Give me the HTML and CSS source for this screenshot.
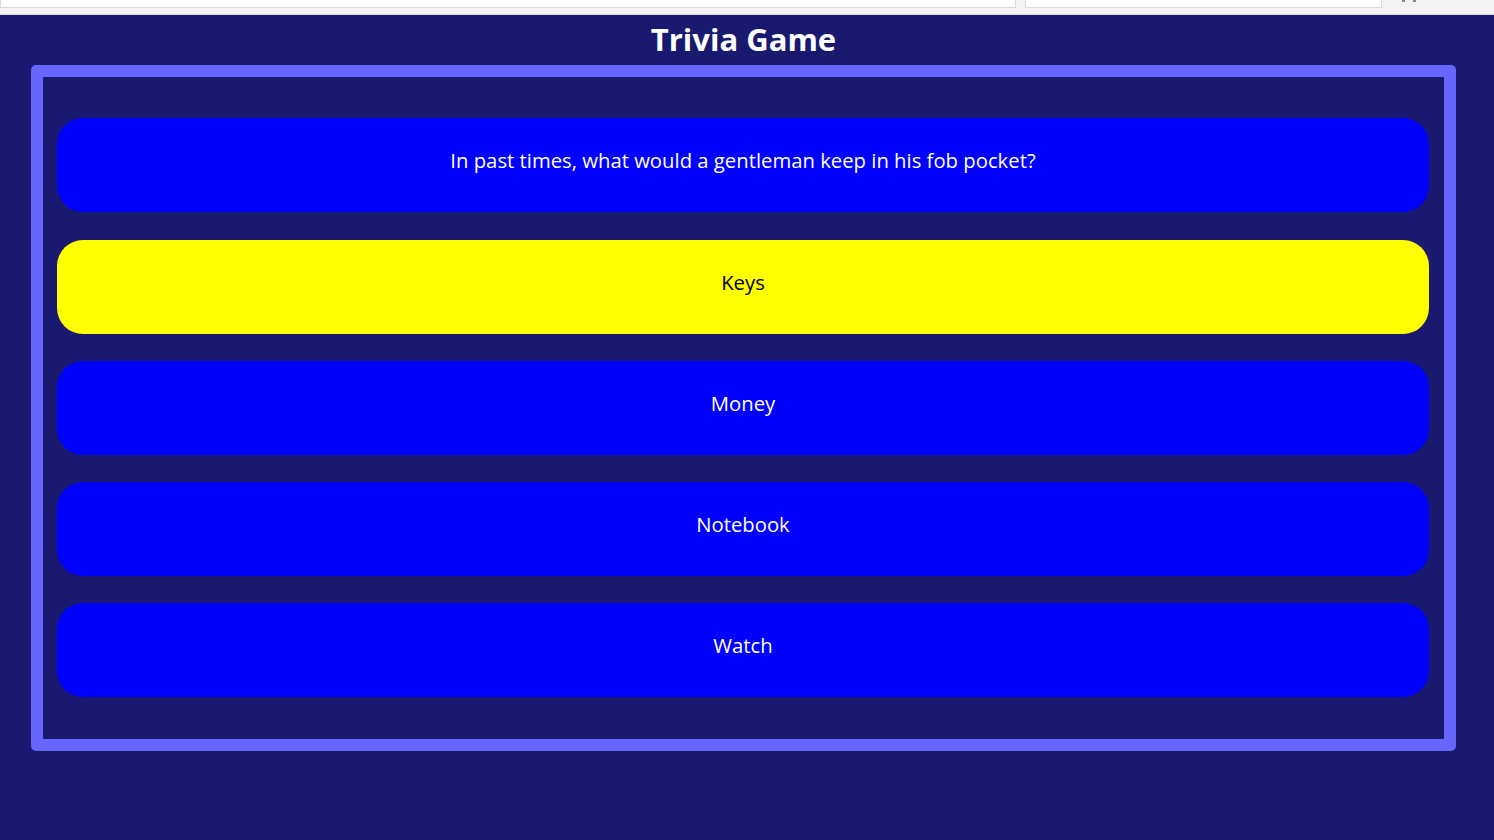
FILE: index.html
```html
<!DOCTYPE html>
<html>
<head>
<meta charset="utf-8">
<link rel="stylesheet" href="styles.css">
</head>
<body>
<div class="chrome">
  <div class="chrome-field chrome-url"></div>
  <div class="chrome-field chrome-search"></div>
  <div class="chrome-icon"><span></span><span></span></div>
</div>
<main class="page">
  <h1 class="title">Trivia Game</h1>
  <section class="board">
    <div class="card question">In past times, what would a gentleman keep in his fob pocket?</div>
    <button class="card answer selected">Keys</button>
    <button class="card answer">Money</button>
    <button class="card answer">Notebook</button>
    <button class="card answer">Watch</button>
  </section>
</main>
</body>
</html>
```
FILE: styles.css
```css
html, body {
  margin: 0;
  padding: 0;
}
body {
  background: #191970;
  font-family: "Open Sans", "Noto Sans", sans-serif;
  color: #ffffff;
  height: 840px;
  overflow: hidden;
}
.chrome {
  height: 14px;
  background: #f3f3f3;
  border-bottom: 1px solid #d8d8d8;
  display: flex;
  align-items: flex-start;
}
.chrome-field {
  height: 7px;
  background: #ffffff;
  border: 1px solid #dcdcdc;
  border-top: none;
}
.chrome-url {
  width: 1014px;
}
.chrome-search {
  margin-left: 9px;
  width: 355px;
}
.chrome-icon {
  margin-left: 20px;
  display: flex;
  gap: 8px;
}
.chrome-icon span {
  width: 3px;
  height: 2px;
  background: #888888;
}
.page {
  margin-left: 31px;
  width: 1425px;
  display: flex;
  flex-direction: column;
  align-items: center;
}
.title {
  margin: 0;
  height: 50px;
  line-height: 48px;
  font-size: 31px;
  font-weight: 700;
  color: #ffffff;
}
.board {
  box-sizing: border-box;
  width: 1425px;
  border: 12px solid #6666ff;
  border-radius: 5px;
  padding: 41px 15px 42px 14px;
  display: flex;
  flex-direction: column;
  gap: 27px;
}
.card {
  box-sizing: border-box;
  height: 94px;
  border-radius: 26px;
  background: #0000ff;
  color: #ffffff;
  display: flex;
  align-items: center;
  justify-content: center;
  padding-bottom: 11px;
  font-family: "Open Sans", "Noto Sans", sans-serif;
  font-size: 20.3px;
  border: none;
  width: 100%;
}
.question {
  margin-bottom: 1px;
}
.answer {
  cursor: pointer;
}
.selected {
  background: #ffff00;
  color: #000000;
}
```
